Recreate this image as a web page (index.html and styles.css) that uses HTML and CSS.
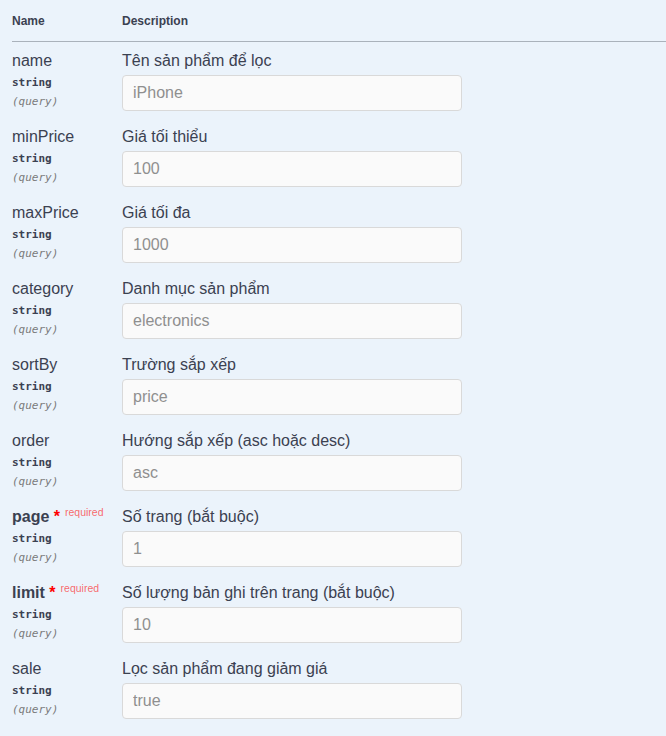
FILE: index.html
```html
<!DOCTYPE html>
<html lang="vi">
<head>
<meta charset="utf-8">
<title>Parameters</title>
<link rel="stylesheet" href="styles.css">
</head>
<body>
<div class="params">
  <div class="head">
    <div class="th">Name</div>
    <div class="th">Description</div>
  </div>

  <div class="row">
    <div class="col-name">
      <div class="pname">name</div>
      <div class="ptype">string</div>
      <div class="pin">(query)</div>
    </div>
    <div class="col-desc">
      <div class="desc">Tên sản phẩm để lọc</div>
      <input class="field" type="text" placeholder="iPhone">
    </div>
  </div>

  <div class="row">
    <div class="col-name">
      <div class="pname">minPrice</div>
      <div class="ptype">string</div>
      <div class="pin">(query)</div>
    </div>
    <div class="col-desc">
      <div class="desc">Giá tối thiểu</div>
      <input class="field" type="text" placeholder="100">
    </div>
  </div>

  <div class="row">
    <div class="col-name">
      <div class="pname">maxPrice</div>
      <div class="ptype">string</div>
      <div class="pin">(query)</div>
    </div>
    <div class="col-desc">
      <div class="desc">Giá tối đa</div>
      <input class="field" type="text" placeholder="1000">
    </div>
  </div>

  <div class="row">
    <div class="col-name">
      <div class="pname">category</div>
      <div class="ptype">string</div>
      <div class="pin">(query)</div>
    </div>
    <div class="col-desc">
      <div class="desc">Danh mục sản phẩm</div>
      <input class="field" type="text" placeholder="electronics">
    </div>
  </div>

  <div class="row">
    <div class="col-name">
      <div class="pname">sortBy</div>
      <div class="ptype">string</div>
      <div class="pin">(query)</div>
    </div>
    <div class="col-desc">
      <div class="desc">Trường sắp xếp</div>
      <input class="field" type="text" placeholder="price">
    </div>
  </div>

  <div class="row">
    <div class="col-name">
      <div class="pname">order</div>
      <div class="ptype">string</div>
      <div class="pin">(query)</div>
    </div>
    <div class="col-desc">
      <div class="desc">Hướng sắp xếp (asc hoặc desc)</div>
      <input class="field" type="text" placeholder="asc">
    </div>
  </div>

  <div class="row">
    <div class="col-name">
      <div class="pname required">page<span class="star">&nbsp;*</span><span class="req">required</span></div>
      <div class="ptype">string</div>
      <div class="pin">(query)</div>
    </div>
    <div class="col-desc">
      <div class="desc">Số trang (bắt buộc)</div>
      <input class="field" type="text" placeholder="1">
    </div>
  </div>

  <div class="row">
    <div class="col-name">
      <div class="pname required">limit<span class="star">&nbsp;*</span><span class="req">required</span></div>
      <div class="ptype">string</div>
      <div class="pin">(query)</div>
    </div>
    <div class="col-desc">
      <div class="desc">Số lượng bản ghi trên trang (bắt buộc)</div>
      <input class="field" type="text" placeholder="10">
    </div>
  </div>

  <div class="row">
    <div class="col-name">
      <div class="pname">sale</div>
      <div class="ptype">string</div>
      <div class="pin">(query)</div>
    </div>
    <div class="col-desc">
      <div class="desc">Lọc sản phẩm đang giảm giá</div>
      <input class="field" type="text" placeholder="true">
    </div>
  </div>
</div>
</body>
</html>
```

FILE: styles.css
```css
* { box-sizing: border-box; }

html, body {
  margin: 0;
  padding: 0;
  background: #ebf3fb;
  min-height: 100%;
}

body {
  font-family: "Liberation Sans", Arial, sans-serif;
  color: #3b4151;
}

.params {
  margin-left: 12px;
}

.head {
  display: grid;
  grid-template-columns: 110px 1fr;
  padding: 14px 0 13px;
  border-bottom: 1px solid #aab2bb;
}

.th {
  font-size: 12px;
  line-height: 14px;
  font-weight: bold;
  color: #3b4151;
}

.row {
  display: grid;
  grid-template-columns: 110px 1fr;
  padding: 10px 0 7px;
}

.col-name {
  display: flex;
  flex-direction: column;
}

.pname {
  font-size: 16px;
  line-height: 18px;
  height: 18px;
  white-space: nowrap;
}

.pname.required {
  font-weight: bold;
}

.star {
  color: #ff0000;
  line-height: 0;
}

.req {
  color: rgba(255, 0, 0, 0.6);
  font-size: 10.5px;
  font-weight: normal;
  line-height: 0;
  position: relative;
  top: -6px;
  padding-left: 5px;
}

.ptype {
  margin-top: 5px;
  font-family: "DejaVu Sans Mono", "Liberation Mono", monospace;
  font-size: 11px;
  font-weight: bold;
  line-height: 16px;
  color: #3b4151;
}

.pin {
  margin-top: 3px;
  font-family: "DejaVu Sans Mono", "Liberation Mono", monospace;
  font-size: 11px;
  font-style: italic;
  line-height: 16px;
  color: #7a7a7a;
}

.col-desc {
  display: flex;
  flex-direction: column;
  align-items: flex-start;
}

.desc {
  font-size: 16px;
  line-height: 18px;
}

.field {
  margin-top: 5px;
  width: 340px;
  height: 36px;
  padding: 8px 10px;
  border: 1px solid #d9d9d9;
  border-radius: 4px;
  background: #fafafa;
  font-family: "Liberation Sans", Arial, sans-serif;
  font-size: 16px;
  color: #3b4151;
  outline: none;
}

.field::placeholder {
  color: #8f8f8f;
  opacity: 1;
}
```
